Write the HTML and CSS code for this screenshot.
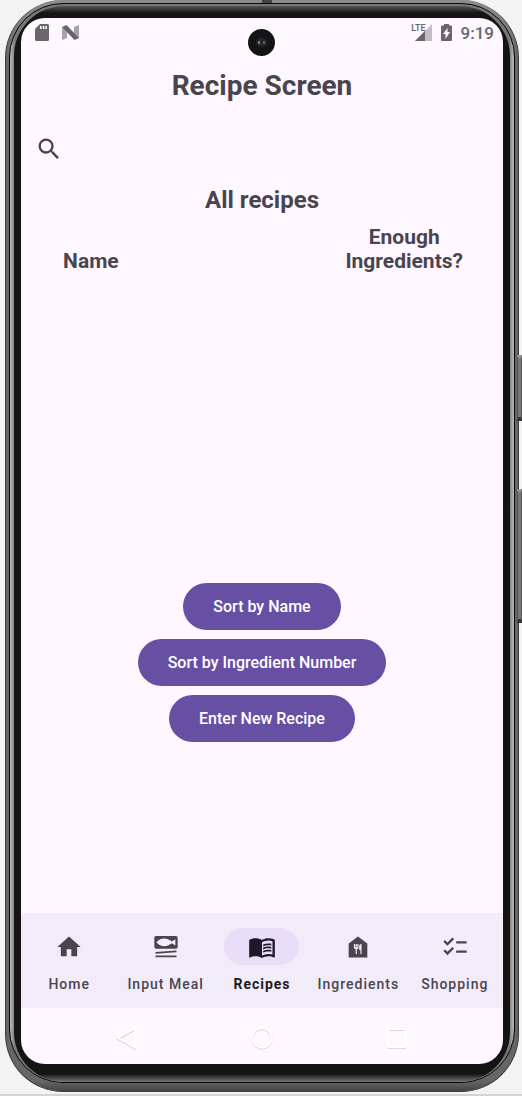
FILE: index.html
```html
<!DOCTYPE html>
<html lang="en">
<head>
<meta charset="utf-8">
<meta name="viewport" content="width=device-width, initial-scale=1">
<title>Recipe Screen</title>
<link rel="stylesheet" href="styles.css">
</head>
<body>
<div class="phone">
  <span class="antenna"></span>
  <span class="side-key power"></span>
  <span class="side-key volume"></span>
  <div class="rim"><div class="bezel"><div class="screen">
    <span class="camera"><span class="lens"></span></span>
    <header class="status">
      <div class="status-group">
        <svg width="14" height="17" viewBox="0 0 14 17"><path fill="#69656b" d="M5 0h7.500Q14 0 14 1.500v14q0 1.500-1.500 1.500h-11Q0 17 0 15.500V5z"/><path fill="#fef7ff" d="M5 2h1.600v3H5zM7.700 2h1.600v3H7.700zM10.300 2h1.600v3h-1.600z"/></svg>
        <svg width="18" height="15" viewBox="0 0 18 15"><path fill="#a8a3aa" d="M0 2l5 4v7l-5 2zM12 2l5-2v13l-5-4z"/><path fill="#69656b" d="M0 2l4.500-2L17 13l-4.500 2z"/></svg>
      </div>
      <div class="status-group">
        <span class="signal"><span class="lte">LTE</span><svg width="17" height="17" viewBox="0 0 17 17"><path fill="#c3bec4" d="M17 0v17H0z"/><path fill="#69656b" d="M10 7v10H0z"/></svg></span>
        <svg width="11" height="17" viewBox="0 0 11 17"><path fill="#69656b" d="M3 0h5v1.500h2q1 0 1 1V16q0 1-1 1H1q-1 0-1-1V2.500q0-1 1-1h2z"/><path fill="#fef7ff" d="M6.500 4v4H9l-4.500 7v-5H2z"/></svg>
        <time class="clock">9:19</time>
      </div>
    </header>
    <main class="content">
      <h1 class="title">Recipe Screen</h1>
      <div class="search">
        <label for="search"><svg width="28" height="28" viewBox="0 0 24 24" role="img" aria-label="Search"><path fill="#49454f" d="M15.500 14h-.79l-.28-.27A6.470 6.470 0 0 0 16 9.500 6.500 6.500 0 1 0 9.500 16c1.610 0 3.090-.59 4.230-1.570l.27.28v.79l5 4.990L20.490 19zm-6 0a4.500 4.500 0 1 1 0-9 4.500 4.500 0 0 1 0 9z"/></svg></label>
        <input id="search" type="search">
      </div>
      <h2 class="subtitle">All recipes</h2>
      <table class="recipes">
        <thead><tr><th class="name">Name</th><th></th><th class="enough">Enough<br>Ingredients?</th></tr></thead>
        <tbody></tbody>
      </table>
      <div class="actions">
        <button type="button">Sort by Name</button>
        <button type="button">Sort by Ingredient Number</button>
        <button type="button">Enter New Recipe</button>
      </div>
    </main>
    <nav class="tabs">
      <a href="#home"><span class="pill"><svg width="28" height="28" viewBox="0 0 24 24"><path fill="#49454f" d="M10 20v-6h4v6h5v-8h3L12 3 2 12h3v8z"/></svg></span>Home</a>
      <a href="#meal"><span class="pill"><svg width="28" height="28" viewBox="0 0 24 24"><path fill="#49454f" fill-rule="evenodd" d="M3.500 2.500h17q1.500 0 1.500 1.500v8q0 1.500-1.500 1.500h-17Q2 13.500 2 12V4q0-1.500 1.500-1.500zM3.800 8c2 2.700 4.500 3.300 6.500 3.300 3 0 5-1.300 6.700-2.500l3 1.900V5.300l-3 1.900C15.300 6 13.300 4.700 10.300 4.700 8.300 4.700 5.800 5.300 3.800 8z"/><path fill="#49454f" d="M3 16.300l18-1.200v1.500L3 17.800zM3 19.300h18v1.500H3z"/></svg></span>Input Meal</a>
      <a href="#recipes" class="active" aria-current="page"><span class="pill"><svg width="28" height="28" viewBox="0 0 24 24"><path fill="#1d192b" d="M21 5c-1.110-.35-2.330-.5-3.500-.5-1.950 0-4.050.4-5.500 1.500-1.450-1.100-3.550-1.500-5.500-1.500S2.450 4.900 1 6v14.650c0 .25.25.5.500.5.1 0 .15-.05.25-.05C3.100 20.450 5.050 20 6.500 20c1.950 0 4.050.4 5.500 1.500 1.350-.85 3.800-1.500 5.500-1.500 1.650 0 3.350.3 4.750 1.050.1.050.15.050.25.050.25 0 .5-.25.5-.5V6c-.6-.45-1.250-.75-2-1zm0 13.500c-1.100-.35-2.300-.5-3.500-.5-1.700 0-4.150.65-5.500 1.500V8c1.350-.85 3.800-1.500 5.500-1.500 1.200 0 2.400.15 3.500.5z"/><path fill="#1d192b" d="M17.500 10.500c.88 0 1.730.09 2.500.26V9.240c-.79-.15-1.640-.24-2.500-.24-1.700 0-3.240.29-4.500.83v1.660c1.130-.64 2.700-.99 4.500-.99zM13 12.490v1.660c1.130-.64 2.700-.99 4.500-.99.88 0 1.730.09 2.500.26V11.900c-.79-.15-1.640-.24-2.500-.24-1.700 0-3.240.3-4.500.83zM17.500 14.330c-1.700 0-3.240.29-4.500.83v1.660c1.130-.64 2.700-.99 4.500-.99.88 0 1.730.09 2.500.26v-1.520c-.79-.16-1.640-.24-2.500-.24z"/></svg></span>Recipes</a>
      <a href="#ingredients"><span class="pill"><svg width="28" height="28" viewBox="0 0 24 24"><path fill="#49454f" d="M12 3L4 9v12h16V9zm.5 9.500c0 .83-.67 1.500-1.500 1.500v4h-1v-4c-.83 0-1.500-.67-1.500-1.500v-3h1v3h.5v-3h1v3h.5v-3h1zM15 18h-1v-3.500h-1v-3c0-1.100.9-2 2-2z"/></svg></span>Ingredients</a>
      <a href="#shopping"><span class="pill"><svg width="28" height="28" viewBox="0 0 24 24"><path fill="#49454f" d="M22 7h-9v2h9zm0 8h-9v2h9zM5.540 11L2 7.460l1.410-1.410 2.120 2.120 4.240-4.240 1.410 1.410zm0 8L2 15.460l1.410-1.410 2.120 2.120 4.240-4.240 1.410 1.410z"/></svg></span>Shopping</a>
    </nav>
    <footer class="system">
      <button type="button" aria-label="Back"><svg width="24" height="24" viewBox="0 0 24 24"><path fill="none" stroke="#d4d0d4" stroke-width="2" d="M20 3.600v19L3 13z"/><path fill="none" stroke="#fff" stroke-width="2" d="M20 2.500v19L3 12z"/></svg></button>
      <button type="button" aria-label="Home"><svg width="24" height="24" viewBox="0 0 24 24"><circle cx="12" cy="12.800" r="9.700" fill="none" stroke="#d0ccd0" stroke-width="2"/><circle cx="12" cy="12" r="9.700" fill="none" stroke="#fff" stroke-width="2"/></svg></button>
      <button type="button" aria-label="Overview"><svg width="24" height="24" viewBox="0 0 24 24"><rect x="3" y="3.800" width="18" height="18" rx="1" fill="none" stroke="#d4d0d4" stroke-width="2"/><rect x="3" y="3" width="18" height="18" rx="1" fill="none" stroke="#fff" stroke-width="2"/></svg></button>
    </footer>
  </div></div></div>
</div>
</body>
</html>
```
FILE: styles.css
```css
* { box-sizing: border-box; }

body {
  margin: 0;
  min-height: 100vh;
  display: flex;
  padding: 0 3px 2px 5px;
  border-bottom: 2px solid #d4d4d4;
  background: #f3f3f3;
  color: #49454f;
  font-family: Roboto, "Liberation Sans", sans-serif;
  overflow-x: hidden;
}

svg { display: block; }

.phone {
  position: relative;
  flex: 1;
  display: flex;
  padding: 3px 3px 8px;
  border: 1px solid #3c3c3c;
  border-top: 0;
  border-radius: 58px;
  background: linear-gradient(#8c8c8c, #666 60px, #666 calc(100% - 10px), #444);
}

.rim {
  flex: 1;
  display: flex;
  padding: 2px 4px 0;
  border: 1px solid #080808;
  border-radius: 54px;
  background: linear-gradient(90deg, #bbb, #777 5px, #777 calc(100% - 5px), #bbb);
}

.bezel {
  flex: 1;
  display: flex;
  padding: 12px 7px 18px;
  border-radius: 50px;
  background: linear-gradient(#555, #141414 7px, #141414 calc(100% - 8px), #777);
}

.screen {
  position: relative;
  flex: 1;
  min-width: 0;
  display: flex;
  flex-direction: column;
  overflow: hidden;
  border-radius: 24px;
  background: #fef7ff;
}

.antenna {
  position: absolute;
  top: 0;
  left: 50%;
  width: 10px;
  height: 3px;
  background: #444;
}

.side-key {
  position: absolute;
  right: -4px;
  width: 5px;
  border: 1px solid #555;
  border-top: 3px solid #999;
  border-bottom: 4px solid #333;
  background: #777;
}

.power { top: 355px; height: 66px; }
.volume { top: 489px; height: 134px; }

.camera {
  position: absolute;
  top: 11px;
  left: calc(50% - 14px);
  width: 27px;
  height: 27px;
  display: grid;
  place-items: center;
  border-radius: 50%;
  background: #141414;
}

.lens {
  width: 11px;
  height: 9px;
  padding: 3px 2px;
  display: flex;
  justify-content: space-between;
  border-radius: 50%;
  background: #252525;
}

.lens::before, .lens::after {
  content: "";
  width: 2px;
  height: 3px;
  background: #4a8ba0;
}

.lens::after { background: #5056b4; }

.status {
  display: flex;
  justify-content: space-between;
  align-items: center;
  height: 29px;
  padding: 0 9px 0 14px;
}

.status-group {
  display: flex;
  align-items: center;
  gap: 13px;
}

.status-group + .status-group { gap: 9px; }

.signal { display: flex; }

.lte {
  margin-right: -11px;
  font-size: 9px;
  line-height: 9px;
  font-weight: 500;
  color: #69656b;
}

.clock {
  font-size: 17px;
  line-height: 20px;
  font-weight: 500;
  color: #69656b;
}

.content {
  flex: 1;
  display: flex;
  flex-direction: column;
}

.title {
  margin: 21px 0 0;
  font-size: 28px;
  line-height: 36px;
  font-weight: 700;
  text-align: center;
}

.search {
  display: flex;
  align-items: center;
  margin-top: 17px;
  padding: 0 14px;
  height: 56px;
}

.search input {
  flex: 1;
  min-width: 0;
  height: 40px;
  border: 0;
  outline: 0;
  background: transparent;
  font: 18px Roboto, sans-serif;
  color: inherit;
}

.subtitle {
  margin: 7px 0 0;
  font-size: 24px;
  line-height: 32px;
  text-align: center;
}

.recipes {
  width: 100%;
  margin-top: 9px;
  border-collapse: collapse;
  table-layout: fixed;
}

.recipes th {
  padding: 0;
  vertical-align: bottom;
  font-size: 21px;
  line-height: 24px;
}

.recipes .name { width: 29%; }
.recipes .enough { width: 41%; }

.actions {
  display: flex;
  flex-direction: column;
  align-items: center;
  gap: 9px;
  margin-top: auto;
  padding-bottom: 171px;
}

.actions button {
  height: 47px;
  padding: 0 30px;
  border: 0;
  border-radius: 24px;
  background: #6750a4;
  color: #fff;
  font: 500 16px/20px Roboto, sans-serif;
}

.tabs {
  display: grid;
  grid-template-columns: repeat(5, 1fr);
  height: 95px;
  padding-top: 15px;
  background: #f2ecf8;
}

.tabs a {
  display: flex;
  flex-direction: column;
  align-items: center;
  gap: 9px;
  color: #49454f;
  font-size: 14px;
  line-height: 20px;
  font-weight: 500;
  letter-spacing: 1px;
  white-space: nowrap;
  text-decoration: none;
}

.pill {
  display: grid;
  place-items: center;
  width: 75px;
  height: 37px;
  border-radius: 19px;
}

.tabs .active {
  color: #1d1b20;
  font-weight: 700;
}

.active .pill { background: #e8def8; }

.system {
  display: flex;
  justify-content: center;
  align-items: center;
  gap: 23%;
  height: 56px;
  padding-top: 3px;
}

.system button {
  padding: 0;
  border: 0;
  background: transparent;
}
```
